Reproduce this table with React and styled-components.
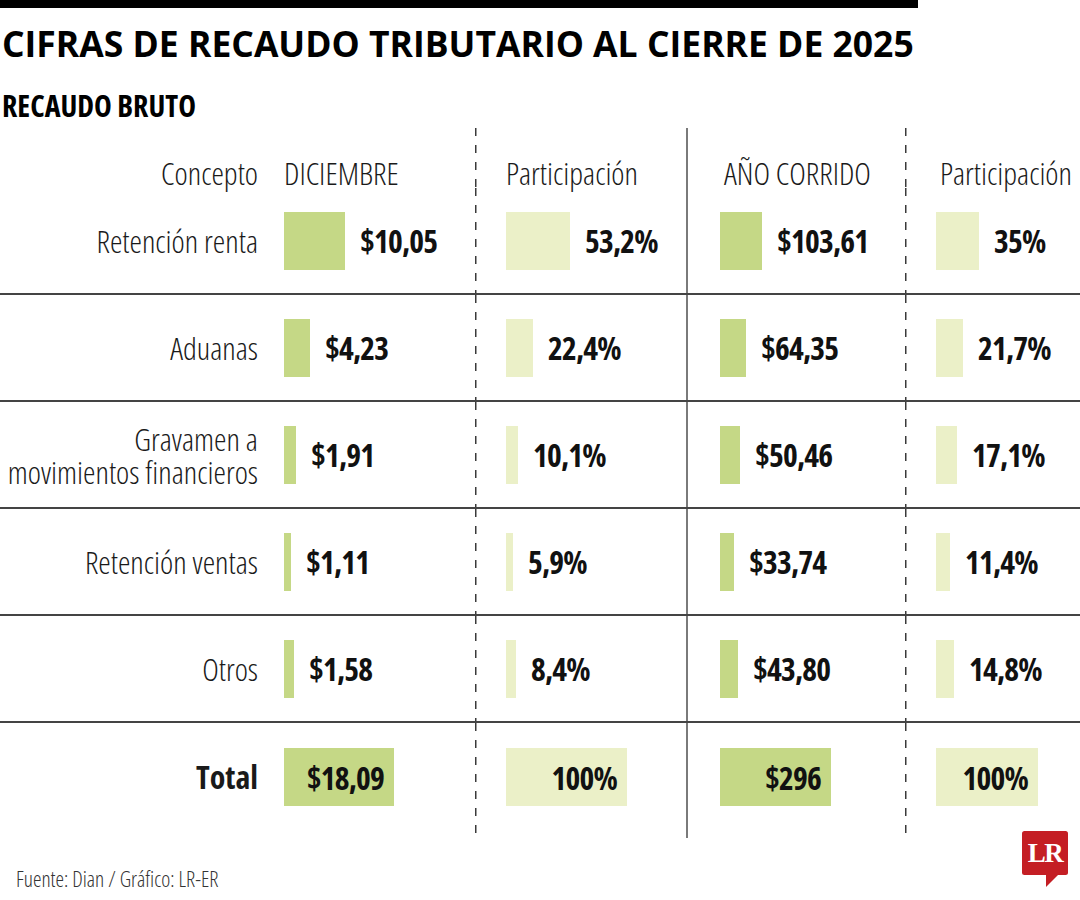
import React from "react";
import styled, { createGlobalStyle } from "styled-components";

const COND = `"Open Sans", "Roboto", sans-serif`;
const HEAD = `"Open Sans", "Liberation Sans", sans-serif`;

const DARK = "#c5d886";
const LIGHT = "#ebf0c8";

const GlobalStyle = createGlobalStyle`
  body {
    margin: 0;
    background: #fff;
    color: #111;
    font-family: ${COND};
    font-stretch: 75%;
  }
`;

const Page = styled.div`
  width: 1080px;
  height: 900px;
  overflow: hidden;
  background: #fff;
`;

const TopBar = styled.div`
  width: 918px;
  height: 8px;
  background: #000;
`;

const Title = styled.h1`
  margin: 15px 0 0 2px;
  font-family: ${HEAD};
  font-stretch: 100%;
  font-weight: 700;
  font-size: 35.5px;
  line-height: 41px;
  color: #000;
`;

const Subtitle = styled.h2`
  margin: 24px 0 0 2px;
  font-family: ${COND};
  font-stretch: 75%;
  font-weight: 700;
  font-size: 30px;
  line-height: 36px;
  color: #000;
`;

const Table = styled.div`
  margin-top: 4px;
`;

const COLS = "284px 191px 211px 219px 175px";

const Row = styled.div`
  display: grid;
  grid-template-columns: ${COLS};
  height: ${({ $h }) => $h}px;
  box-sizing: border-box;
  border-bottom: ${({ $rule }) => ($rule ? "2px solid #444" : "none")};
`;

const dividers = {
  dashed: `repeating-linear-gradient(to bottom, #3a3a3a 0 8px, transparent 8px 17px) left top / 1.5px 100% no-repeat`,
  solid: `linear-gradient(#7a7a7a, #7a7a7a) left top / 2px 100% no-repeat`,
  none: "none",
};

const Cell = styled.div`
  display: flex;
  align-items: ${({ $top }) => ($top ? "flex-start" : "center")};
  justify-content: ${({ $right }) => ($right ? "flex-end" : "flex-start")};
  padding-left: ${({ $pl }) => $pl || 0}px;
  padding-right: ${({ $pr }) => $pr || 0}px;
  padding-top: ${({ $pt }) => $pt || 0}px;
  gap: 15px;
  background: ${({ $div }) => dividers[$div || "none"]};
`;

const HeadText = styled.span`
  font-size: 31.5px;
  font-weight: 300;
  line-height: 34px;
  color: #1a1a1a;
  white-space: nowrap;
`;

const Label = styled.span`
  font-size: 31.5px;
  line-height: 33px;
  text-align: right;
  color: #1a1a1a;
  white-space: nowrap;
  font-weight: ${({ $bold }) => ($bold ? 700 : 300)};
`;

const Bar = styled.div`
  height: 58px;
  flex: none;
  background: ${({ $light }) => ($light ? LIGHT : DARK)};
`;

const Value = styled.span`
  font-size: 31.5px;
  font-weight: 700;
  letter-spacing: -0.8px;
  color: #111;
  white-space: nowrap;
`;

const TotalBox = styled.div`
  height: 58px;
  box-sizing: border-box;
  display: flex;
  align-items: center;
  justify-content: flex-end;
  padding-right: 10px;
  background: ${({ $light }) => ($light ? LIGHT : DARK)};
`;

const Footer = styled.div`
  display: flex;
  justify-content: space-between;
  align-items: flex-end;
  margin-top: -7px;
  padding: 0 12px 13px 16px;
`;

const Source = styled.span`
  font-size: 21.5px;
  font-weight: 300;
  line-height: 22px;
  color: #333;
  margin-bottom: -3px;
`;

const Logo = () => (
  <svg width="46" height="56" viewBox="0 0 46 56">
    <rect x="0" y="0" width="46" height="44" rx="2.5" fill="#c41e24" />
    <path d="M24 43 L24 56 L37 43 Z" fill="#c41e24" />
    <text
      x="23"
      y="31"
      textAnchor="middle"
      fill="#fff"
      fontFamily='"Liberation Serif", serif'
      fontWeight="700"
      fontSize="27"
      letterSpacing="-1.5"
    >
      LR
    </text>
  </svg>
);

const PADS = [0, 31, 34, 31];
const DIVS = ["none", "dashed", "solid", "dashed"];
const SCALES = [6.05, 1.2, 0.405, 1.23];

const rows = [
  { label: ["Retención renta"], vals: [10.05, 53.2, 103.61, 35], text: ["$10,05", "53,2%", "$103,61", "35%"] },
  { label: ["Aduanas"], vals: [4.23, 22.4, 64.35, 21.7], text: ["$4,23", "22,4%", "$64,35", "21,7%"] },
  {
    label: ["Gravamen a", "movimientos financieros"],
    vals: [1.91, 10.1, 50.46, 17.1],
    text: ["$1,91", "10,1%", "$50,46", "17,1%"],
  },
  { label: ["Retención ventas"], vals: [1.11, 5.9, 33.74, 11.4], text: ["$1,11", "5,9%", "$33,74", "11,4%"] },
  { label: ["Otros"], vals: [1.58, 8.4, 43.8, 14.8], text: ["$1,58", "8,4%", "$43,80", "14,8%"] },
];

const totals = [
  { text: "$18,09", w: 110 },
  { text: "100%", w: 121 },
  { text: "$296", w: 111 },
  { text: "100%", w: 102 },
];

const headers = ["DICIEMBRE", "Participación", "AÑO CORRIDO", "Participación"];

export default function App() {
  return (
    <Page>
      <GlobalStyle />
      <TopBar />
      <Title>CIFRAS DE RECAUDO TRIBUTARIO AL CIERRE DE 2025</Title>
      <Subtitle>RECAUDO BRUTO</Subtitle>
      <Table>
        <Row $h={60}>
          <Cell $right $top $pr={26} $pt={28}>
            <HeadText>Concepto</HeadText>
          </Cell>
          {headers.map((h, i) => (
            <Cell key={i} $top $pt={28} $pl={PADS[i] + (i >= 2 ? 4 : 0)} $div={DIVS[i]}>
              <HeadText>{h}</HeadText>
            </Cell>
          ))}
        </Row>
        {rows.map((r, ri) => (
          <Row key={ri} $h={107} $rule>
            <Cell $right $pr={26}>
              <Label>
                {r.label.map((l, li) => (
                  <div key={li}>{l}</div>
                ))}
              </Label>
            </Cell>
            {r.vals.map((v, i) => (
              <Cell key={i} $pl={PADS[i]} $div={DIVS[i]}>
                <Bar $light={i % 2 === 1} style={{ width: Math.round(v * SCALES[i]) }} />
                <Value>{r.text[i]}</Value>
              </Cell>
            ))}
          </Row>
        ))}
        <Row $h={115}>
          <Cell $right $top $pr={26} $pt={25}>
            <Label $bold style={{ lineHeight: "58px", fontSize: 32 }}>Total</Label>
          </Cell>
          {totals.map((t, i) => (
            <Cell key={i} $top $pt={25} $pl={PADS[i]} $div={DIVS[i]}>
              <TotalBox $light={i % 2 === 1} style={{ width: t.w }}>
                <Value>{t.text}</Value>
              </TotalBox>
            </Cell>
          ))}
        </Row>
      </Table>
      <Footer>
        <Source>Fuente: Dian / Gráfico: LR-ER</Source>
        <Logo />
      </Footer>
    </Page>
  );
}
